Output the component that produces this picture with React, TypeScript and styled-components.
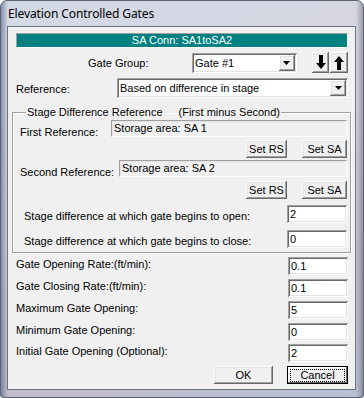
import React from 'react';
import styled, { createGlobalStyle, css } from 'styled-components';

const GlobalStyle = createGlobalStyle`
  html, body {
    margin: 0;
    padding: 0;
    background: #ffffff;
  }
  body {
    font-family: "Liberation Sans", Arial, sans-serif;
    font-size: 11px;
    color: #000;
  }
`;

const sunken = css`
  box-shadow: inset 1px 1px 0 #a0a0a0, inset -1px -1px 0 #ffffff, inset 2px 2px 0 #696969,
    inset -2px -2px 0 #e3e3e3;
`;

const raised = css`
  box-shadow: inset -1px -1px 0 #696969, inset 1px 1px 0 #ffffff, inset -2px -2px 0 #a0a0a0,
    inset 2px 2px 0 #e3e3e3;
`;

const Window = styled.div`
  box-sizing: border-box;
  width: 364px;
  height: 398px;
  border: 1px solid #5a6474;
  border-radius: 7px 7px 3px 3px;
  background:
    linear-gradient(90deg, rgba(70, 86, 120, 0.55) 0, rgba(70, 86, 120, 0) 7px),
    linear-gradient(270deg, rgba(90, 80, 100, 0.45) 0, rgba(90, 80, 100, 0) 7px),
    linear-gradient(160deg, #d3dae6 0%, #d6d3df 45%, #c4bccc 75%, #b7c1d4 100%);
  padding: 0 7px 7px 6px;
  display: flex;
  flex-direction: column;
  overflow: hidden;
`;

const TitleBar = styled.div`
  height: 28px;
  display: flex;
  align-items: center;
  padding-left: 1px;
  font-family: "Noto Sans", "Open Sans", sans-serif;
  font-size: 12px;
  color: #000;
  letter-spacing: -0.1px;
`;

const Client = styled.div`
  flex: 1;
  background: #f0f0f0;
  border: 1px solid #6d7585;
  padding: 6px 7px 5px 8px;
  display: flex;
  flex-direction: column;
`;

const HeaderBar = styled.div`
  height: 15px;
  box-sizing: border-box;
  background: #008080;
  color: #ffffff;
  border-top: 1px solid #a0a0a0;
  border-left: 1px solid #a0a0a0;
  border-bottom: 1px solid #ffffff;
  border-right: 1px solid #ffffff;
  display: flex;
  align-items: center;
  justify-content: center;
  line-height: 13px;
`;

const Row = styled.div<{ $top: number; $height?: number }>`
  display: flex;
  align-items: center;
  margin-top: ${(p) => p.$top}px;
  height: ${(p) => p.$height ?? 18}px;
`;

const Label = styled.div<{ $width?: number; $indent?: number; $shift?: number }>`
  flex: ${(p) => (p.$width ? `0 0 ${p.$width}px` : '1')};
  padding-left: ${(p) => p.$indent ?? 0}px;
  box-sizing: border-box;
  white-space: nowrap;
  position: relative;
  top: ${(p) => p.$shift ?? 0}px;
`;

const Combo = styled.div<{ $width: number }>`
  width: ${(p) => p.$width}px;
  height: 20px;
  box-sizing: border-box;
  background: #ffffff;
  ${sunken};
  display: flex;
  align-items: center;
  padding: 2px 2px 2px 3px;
`;

const ComboText = styled.span`
  flex: 1;
`;

const DropButton = styled.div`
  width: 16px;
  height: 16px;
  background: #f0f0f0;
  ${raised};
  display: flex;
  align-items: center;
  justify-content: center;
`;

const ArrowButton = styled.div`
  width: 18px;
  height: 21px;
  box-sizing: border-box;
  background: #f0f0f0;
  ${raised};
  display: flex;
  align-items: center;
  justify-content: center;
  margin-left: 1px;
`;

const Spacer = styled.div<{ $w: number }>`
  flex: 0 0 ${(p) => p.$w}px;
`;

const GroupBox = styled.fieldset`
  margin: 8px -3px 0 -4px;
  padding: 0 3px 4px 7px;
  border: 1px solid #a0a0a0;
  box-shadow: inset 1px 1px 0 #ffffff, 1px 1px 0 #ffffff;
  display: flex;
  flex-direction: column;
`;

const Legend = styled.legend`
  padding: 0 1px;
  margin-left: 6px;
  line-height: 13px;
  white-space: nowrap;
`;

const LegendNote = styled.span`
  margin-left: 16px;
`;

const ReadOnlyField = styled.div<{ $width: number }>`
  width: ${(p) => p.$width}px;
  height: 17px;
  box-sizing: border-box;
  border-top: 1px solid #a0a0a0;
  border-left: 1px solid #a0a0a0;
  border-bottom: 1px solid #ffffff;
  border-right: 1px solid #ffffff;
  box-shadow: inset 1px 1px 0 #e3e3e3;
  padding: 0 2px;
  line-height: 14px;
  margin-left: auto;
`;

const TextBox = styled.div`
  width: 60px;
  height: 18px;
  box-sizing: border-box;
  background: #ffffff;
  ${sunken};
  padding: 2px 0 0 3px;
  line-height: 14px;
  margin-left: auto;
`;

const ButtonRow = styled.div<{ $top: number; $gap: number }>`
  display: flex;
  justify-content: flex-end;
  gap: ${(p) => p.$gap}px;
  margin-top: ${(p) => p.$top}px;
`;

const PushButton = styled.div<{ $width: number; $default?: boolean }>`
  width: ${(p) => p.$width}px;
  height: 18px;
  box-sizing: border-box;
  background: #f0f0f0;
  display: flex;
  align-items: center;
  justify-content: center;
  ${(p) =>
    p.$default
      ? css`
          border: 1px solid #000;
          box-shadow: inset -1px -1px 0 #696969, inset 1px 1px 0 #ffffff;
        `
      : raised};
`;

const FocusRect = styled.span`
  border: 1px dotted #000;
  padding: 0 9px;
  line-height: 11px;
`;

const DownTriangle = () => (
  <svg width="7" height="4" viewBox="0 0 7 4">
    <path d="M0 0H7L3.5 4Z" fill="#000" />
  </svg>
);

const BigArrow = ({ up }: { up?: boolean }) => (
  <svg width="10" height="15" viewBox="0 0 10 15" style={{ transform: up ? 'rotate(180deg)' : undefined }}>
    <path d="M3 0H7V8H10L5 14L0 8H3Z" fill="#000" />
  </svg>
);

export default function App() {
  return (
    <>
      <GlobalStyle />
      <Window>
        <TitleBar>Elevation Controlled Gates</TitleBar>
        <Client>
          <HeaderBar>SA Conn: SA1toSA2</HeaderBar>

          <Row $top={4} $height={21}>
            <Label $width={176} $indent={72}>Gate Group:</Label>
            <Combo $width={107}>
              <ComboText>Gate #1</ComboText>
              <DropButton>
                <DownTriangle />
              </DropButton>
            </Combo>
            <Spacer $w={14} />
            <ArrowButton>
              <BigArrow />
            </ArrowButton>
            <ArrowButton>
              <BigArrow up />
            </ArrowButton>
          </Row>

          <Row $top={5} $height={20}>
            <Label $width={101} $shift={1}>Reference:</Label>
            <Combo $width={231}>
              <ComboText>Based on difference in stage</ComboText>
              <DropButton>
                <DownTriangle />
              </DropButton>
            </Combo>
          </Row>

          <GroupBox>
            <Legend>
              Stage Difference Reference
              <LegendNote>(First minus Second)</LegendNote>
            </Legend>
            <Row $top={1} $height={17}>
              <Label $shift={3}>First Reference:</Label>
              <ReadOnlyField $width={236}>Storage area: SA 1</ReadOnlyField>
            </Row>
            <ButtonRow $top={3} $gap={15}>
              <PushButton $width={41}>Set RS</PushButton>
              <PushButton $width={45}>Set SA</PushButton>
            </ButtonRow>
            <Row $top={2} $height={17}>
              <Label $shift={3}>Second Reference:</Label>
              <ReadOnlyField $width={228}>Storage area: SA 2</ReadOnlyField>
            </Row>
            <ButtonRow $top={4} $gap={15}>
              <PushButton $width={41}>Set RS</PushButton>
              <PushButton $width={45}>Set SA</PushButton>
            </ButtonRow>
            <Row $top={6}>
              <Label $indent={4} $shift={2}>Stage difference at which gate begins to open:</Label>
              <TextBox>2</TextBox>
            </Row>
            <Row $top={7}>
              <Label $indent={4} $shift={2}>Stage difference at which gate begins to close:</Label>
              <TextBox>0</TextBox>
            </Row>
          </GroupBox>

          <Row $top={4}>
            <Label $shift={-2}>Gate Opening Rate:(ft/min):</Label>
            <TextBox>0.1</TextBox>
          </Row>
          <Row $top={4}>
            <Label $shift={-2}>Gate Closing Rate:(ft/min):</Label>
            <TextBox>0.1</TextBox>
          </Row>
          <Row $top={4}>
            <Label $shift={-2}>Maximum Gate Opening:</Label>
            <TextBox>5</TextBox>
          </Row>
          <Row $top={4}>
            <Label $shift={-2}>Minimum Gate Opening:</Label>
            <TextBox>0</TextBox>
          </Row>
          <Row $top={3}>
            <Label $shift={-2}>Initial Gate Opening (Optional):</Label>
            <TextBox>2</TextBox>
          </Row>

          <ButtonRow $top={4} $gap={14}>
            <PushButton $width={59}>OK</PushButton>
            <PushButton $width={61} $default>
              <FocusRect>Cancel</FocusRect>
            </PushButton>
          </ButtonRow>
        </Client>
      </Window>
    </>
  );
}
